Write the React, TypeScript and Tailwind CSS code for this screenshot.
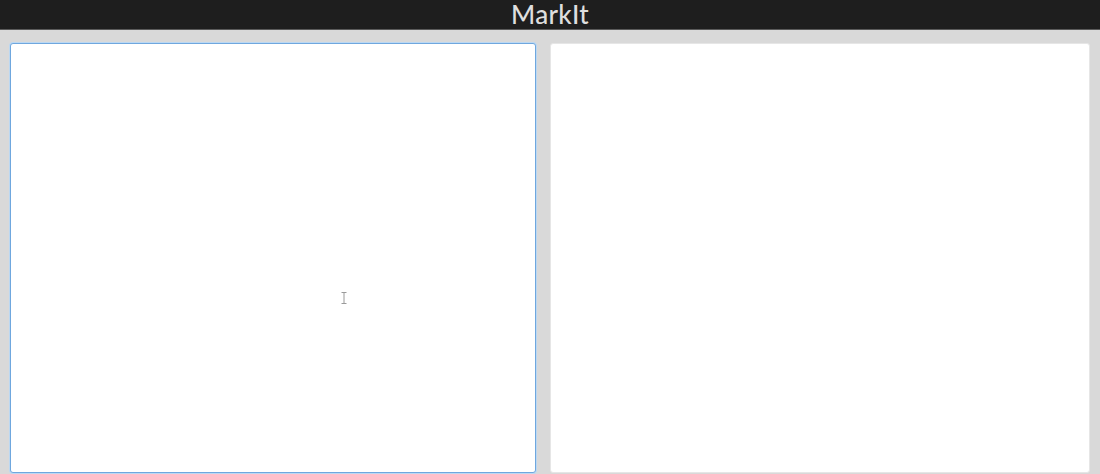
import React from 'react';

const App: React.FC = () => {
  return (
    <div className="h-[474px] w-[1100px] bg-[#d9d9d9] flex flex-col overflow-hidden" style={{ fontFamily: 'Lato, "Open Sans", sans-serif' }}>
      <header className="h-[30px] shrink-0 bg-[#1e1e1e] border-b border-[#5a5a5a] flex items-center justify-center">
        <h1 className="text-[26px] leading-[29px] font-medium text-[#dedede] tracking-[0.3px]">MarkIt</h1>
      </header>

      <main className="flex-1 flex gap-[14px] pl-[10px] pr-[10px] pt-[13px] pb-[1px] min-h-0">
        <div className="w-[526px] relative bg-white border border-[#6fa7de] rounded-[3px] shadow-[0_0_0_1px_#bcd8f2]">
          <textarea className="w-full h-full resize-none outline-none bg-transparent p-2" />
          <svg className="absolute left-[330px] top-[248px] pointer-events-none" width="6" height="12" viewBox="0 0 6 12">
            <path d="M0.5 0.5h5M0.5 11.5h5M3 0.5v11" stroke="#9a9a9a" strokeWidth="1" fill="none" />
          </svg>
        </div>
        <div className="flex-1 bg-white rounded-[3px] border border-[#e6e6e6]" />
      </main>
    </div>
  );
};

export default App;
